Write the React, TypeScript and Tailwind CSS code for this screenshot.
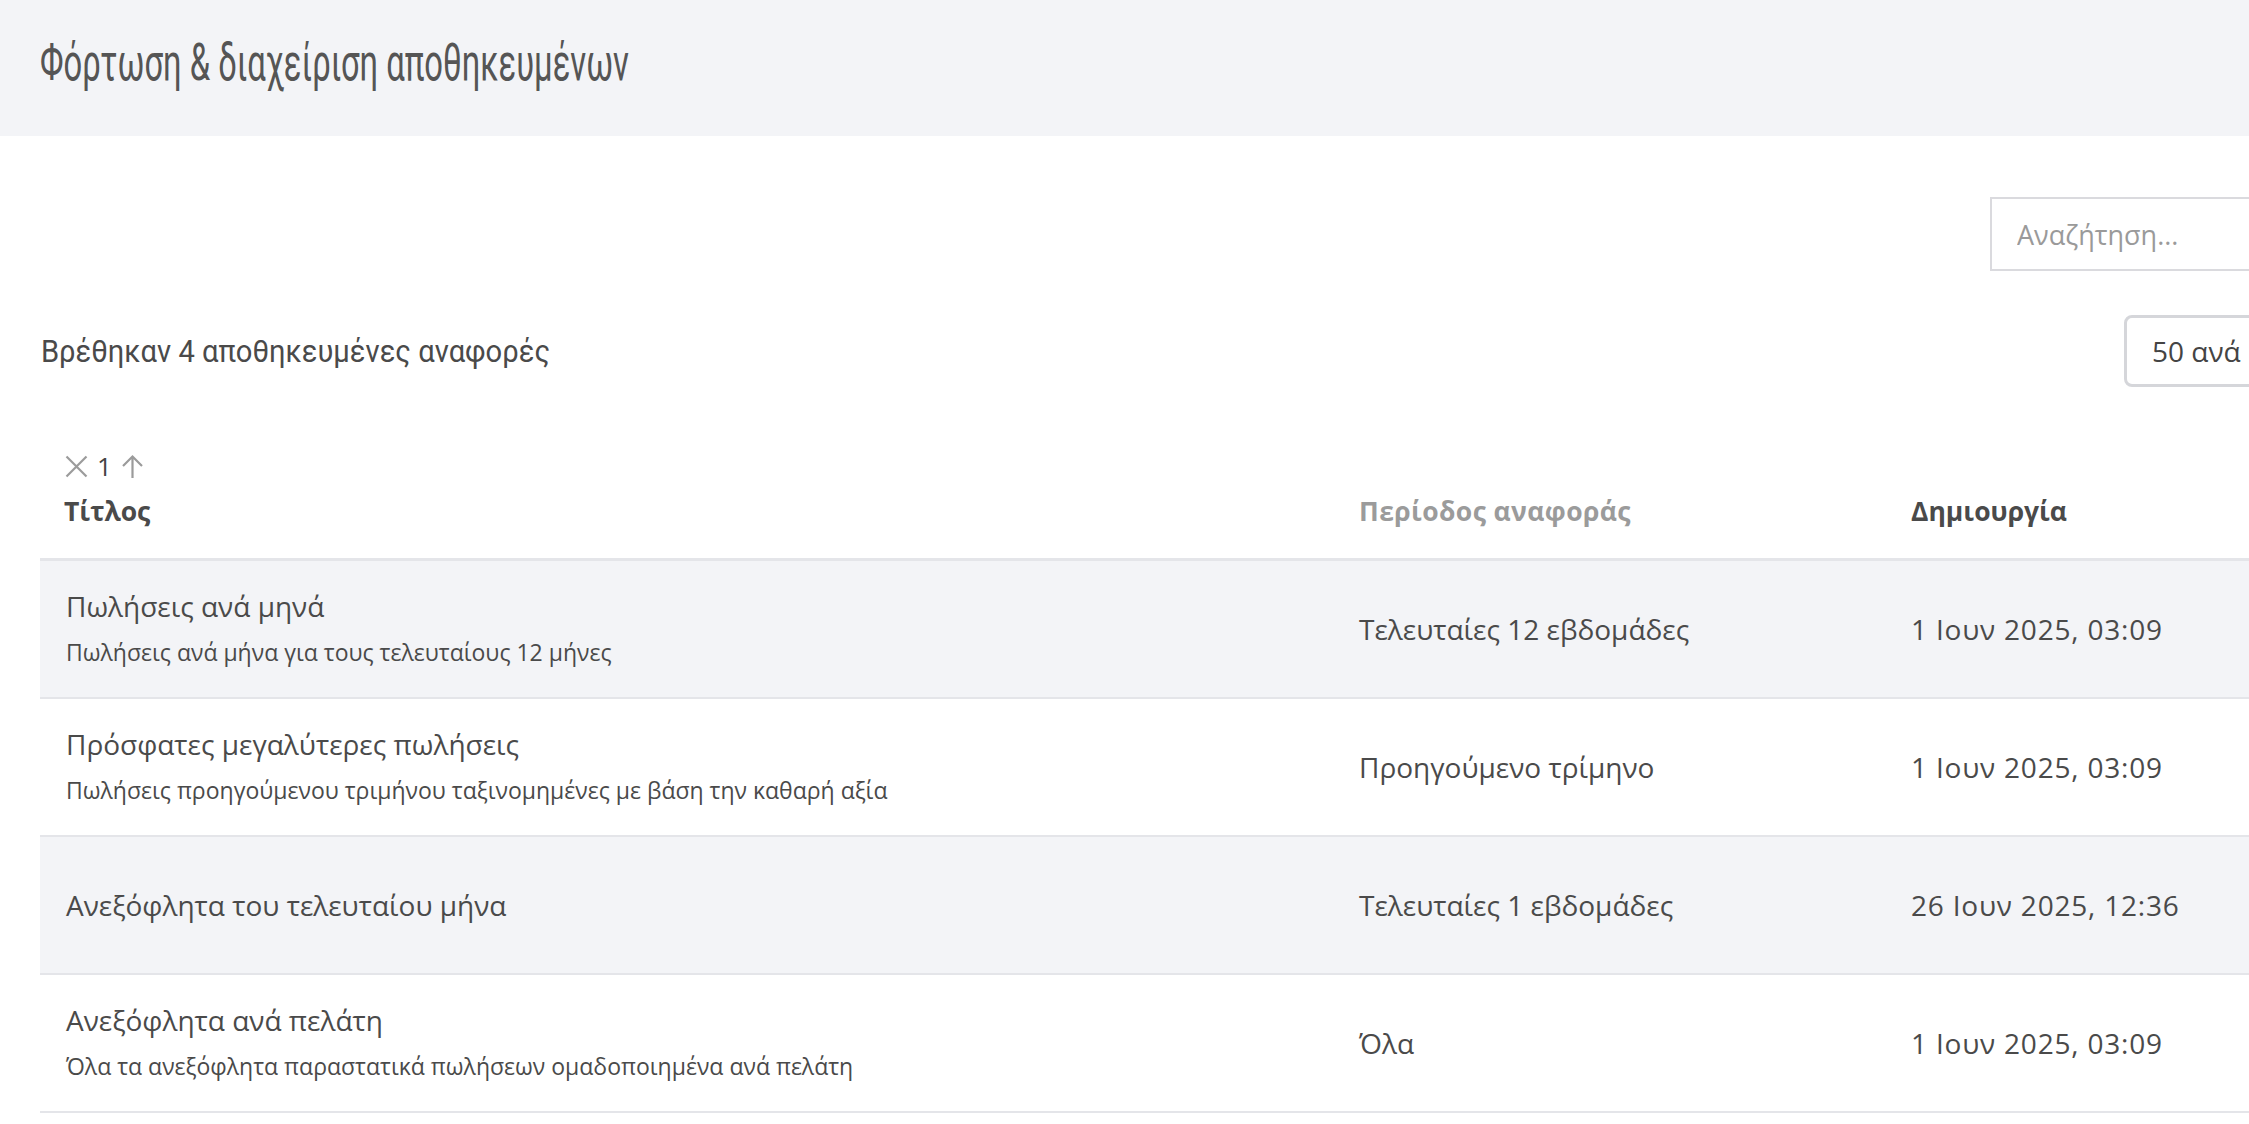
import { useState } from 'react'

type Report = {
  title: string
  description?: string
  period: string
  created: string
}

const reports: Report[] = [
  {
    title: 'Πωλήσεις ανά μηνά',
    description: 'Πωλήσεις ανά μήνα για τους τελευταίους 12 μήνες',
    period: 'Τελευταίες 12 εβδομάδες',
    created: '1 Ιουν 2025, 03:09',
  },
  {
    title: 'Πρόσφατες μεγαλύτερες πωλήσεις',
    description: 'Πωλήσεις προηγούμενου τριμήνου ταξινομημένες με βάση την καθαρή αξία',
    period: 'Προηγούμενο τρίμηνο',
    created: '1 Ιουν 2025, 03:09',
  },
  {
    title: 'Ανεξόφλητα του τελευταίου μήνα',
    period: 'Τελευταίες 1 εβδομάδες',
    created: '26 Ιουν 2025, 12:36',
  },
  {
    title: 'Ανεξόφλητα ανά πελάτη',
    description: 'Όλα τα ανεξόφλητα παραστατικά πωλήσεων ομαδοποιημένα ανά πελάτη',
    period: 'Όλα',
    created: '1 Ιουν 2025, 03:09',
  },
]

function CloseIcon() {
  return (
    <svg width="25" height="25" viewBox="0 0 25 25" fill="none">
      <path d="M2.5 2.5L22.5 22.5M22.5 2.5L2.5 22.5" stroke="#9b9b9b" strokeWidth="2.2" />
    </svg>
  )
}

function ArrowUpIcon() {
  return (
    <svg width="25" height="25" viewBox="0 0 25 25" fill="none">
      <path d="M12.5 24V2.5M3 12L12.5 2.5L22 12" stroke="#9b9b9b" strokeWidth="2.2" />
    </svg>
  )
}

export default function App() {
  const [query, setQuery] = useState('')

  return (
    <div className="h-screen w-full overflow-hidden bg-white font-['Open_Sans','Noto_Sans',sans-serif] text-[#4a4a4a]">
      <header className="flex h-[136px] items-center bg-[#f3f4f7] pb-[10px] pl-[40px]">
        <h1 className="origin-left scale-x-[0.63] whitespace-nowrap font-['Roboto',sans-serif] text-[52px] leading-none text-[#555555]">
          Φόρτωση &amp; διαχείριση αποθηκευμένων
        </h1>
      </header>

      <div className="w-[2420px] px-[40px]">
        <div className="flex justify-end pt-[61px]">
          <input
            value={query}
            onChange={(e) => setQuery(e.target.value)}
            placeholder="Αναζήτηση..."
            className="h-[74px] w-[390px] border-2 border-[#dadade] pl-[25px] text-[27px] outline-none placeholder:text-[#9a9a9a]"
          />
        </div>

        <div className="mt-[44px] flex h-[72px] items-center justify-between">
          <p className="origin-left scale-x-[0.91] whitespace-nowrap pl-px font-['Roboto',sans-serif] text-[32px] text-[#4a4a4a]">
            Βρέθηκαν 4 αποθηκευμένες αναφορές
          </p>
          <div className="flex h-[72px] w-[256px] items-center overflow-hidden whitespace-nowrap rounded-[8px] border-[3px] border-[#d5d6da] pl-[25px] text-[28px] text-[#444444]">
            50 ανά
          </div>
        </div>

        <div className="mt-[53px]">
          <div className="grid h-[121px] grid-cols-[1300px_553px_1fr] border-b-[3px] border-[#e4e5e9] text-[26.5px] font-bold">
            <div className="flex flex-col justify-end pb-[29px] pl-[24px]">
              <div className="mb-[12px] flex h-[30px] items-center gap-[8px] font-normal">
                <CloseIcon />
                <span className="text-[26px] leading-none text-[#444444]">1</span>
                <ArrowUpIcon />
              </div>
              <span className="leading-[36px]">Τίτλος</span>
            </div>
            <div className="flex flex-col justify-end pb-[29px] pl-[19px]">
              <span className="tracking-[0.4px] leading-[36px] text-[#9b9b9b]">Περίοδος αναφοράς</span>
            </div>
            <div className="flex flex-col justify-end pb-[29px] pl-[18px]">
              <span className="leading-[36px]">Δημιουργία</span>
            </div>
          </div>

          {reports.map((r, i) => (
            <div
              key={r.title}
              className={`grid h-[138px] grid-cols-[1300px_553px_1fr] border-b-2 border-[#e4e5e9] ${
                i % 2 === 0 ? 'bg-[#f3f4f7]' : 'bg-white'
              }`}
            >
              <div className={`flex flex-col justify-center pl-[26px] ${r.description ? 'pb-[4px]' : ''}`}>
                <span className="text-[28px] leading-[40px]">{r.title}</span>
                {r.description && (
                  <span className="mt-[10px] text-[23px] leading-[32px]">{r.description}</span>
                )}
              </div>
              <div className="flex items-center pl-[19px] text-[28px]">{r.period}</div>
              <div className="flex items-center pl-[18px] text-[28px] tracking-[0.8px]">{r.created}</div>
            </div>
          ))}
        </div>
      </div>
    </div>
  )
}
